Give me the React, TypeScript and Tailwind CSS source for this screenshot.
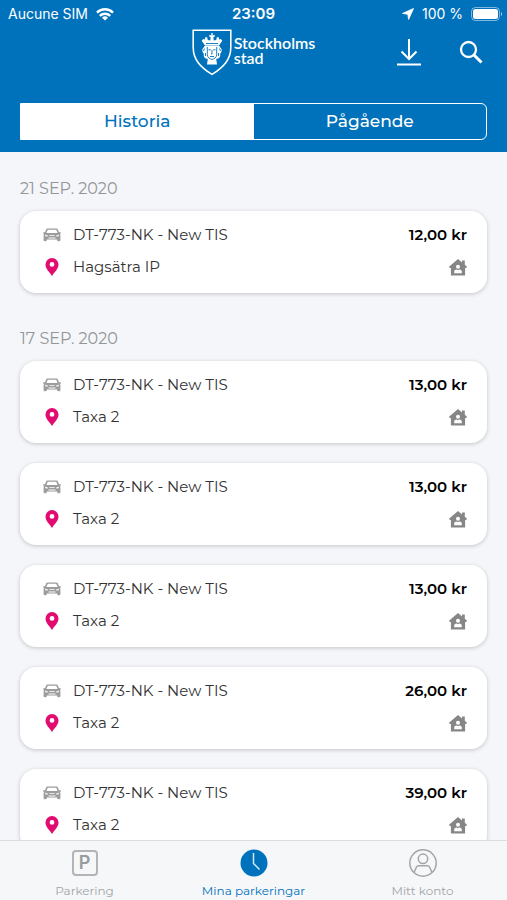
import { useState } from 'react'

type Parking = { plate: string; place: string; price: string }
type Day = { date: string; parkings: Parking[] }

const PLATE = 'DT-773-NK - New TIS'

const days: Day[] = [
  { date: '21 SEP. 2020', parkings: [{ plate: PLATE, place: 'Hagsätra IP', price: '12,00 kr' }] },
  {
    date: '17 SEP. 2020',
    parkings: [
      { plate: PLATE, place: 'Taxa 2', price: '13,00 kr' },
      { plate: PLATE, place: 'Taxa 2', price: '13,00 kr' },
      { plate: PLATE, place: 'Taxa 2', price: '13,00 kr' },
      { plate: PLATE, place: 'Taxa 2', price: '26,00 kr' },
      { plate: PLATE, place: 'Taxa 2', price: '39,00 kr' },
    ],
  },
]

const WifiIcon = () => (
  <svg width="18" height="13" viewBox="0 0 18 13" fill="none" stroke="white" strokeWidth="2.4">
    <path d="M1 4.6a11.4 11.4 0 0 1 16 0" />
    <path d="M3.8 7.9a7.4 7.4 0 0 1 10.4 0" />
    <path d="M6 9.8a4.3 4.3 0 0 1 6 0L9 12.6z" fill="white" stroke="none" />
  </svg>
)

const LocationIcon = () => (
  <svg width="12" height="12" viewBox="0 0 12 12" fill="white" stroke="white" strokeWidth="0.8" strokeLinejoin="round">
    <path d="M11.500.500 6.600 11.500 5.800 6.300.500 5.400z" />
  </svg>
)

const BatteryIcon = () => (
  <svg width="32" height="14" viewBox="0 0 32 14" fill="none">
    <rect x="0.5" y="0.5" width="28" height="13" rx="4" stroke="white" strokeOpacity="0.5" />
    <rect x="2" y="2" width="25" height="10" rx="2.5" fill="white" />
    <path d="M30 5c1.6.6 1.6 3.4 0 4z" fill="white" fillOpacity="0.6" />
  </svg>
)

const Shield = () => (
  <svg width="40" height="47" viewBox="0 0 40 47" fill="none">
    <path
      d="M1.2 1.2h37.6v17.2c0 12.4-7.6 20-18.8 27C8.800 38.400 1.200 30.800 1.200 18.400z"
      stroke="white"
      strokeWidth="1.6"
    />
    <path
      d="M19.300 4h1.400v2.400l2-.6v2l-1.400.4.500 3.300 2.400-.4.800-3 2 .3-.2 2 2-.3 1.500 1.600-3.100 4.500H12.800L9.700 11.700l1.500-1.600 2 .3-.2-2 2-.3.800 3 2.400.4.500-3.300-1.400-.4v-2l2 .6z"
      fill="white"
    />
    <path
      d="M13 16.500h14c1.200 2 3.200 3.200 2.700 5.700-.3 1.700-1.900 1.700-1.500 3.500.5 2.400-1.600 4.300-4 4L25 35.500H15l.800-5.800c-2.400.3-4.500-1.600-4-4 .4-1.800-1.200-1.800-1.500-3.500-.5-2.500 1.500-3.700 2.700-5.700z"
      fill="white"
    />
    <path d="M15.300 18v7.500c0 2.800 2.500 4.500 4.700 5 2.200-.5 4.700-2.200 4.700-5V18" stroke="#0072bc" strokeWidth="0.9" />
    <path
      d="M16.500 20.800h2.300M21.200 20.800h2.300M20 21v4h-1M18 27.500h4M12.500 19.500l-1 2.500M27.500 19.500l1 2.500M13.500 24v3M26.500 24v3M14 14.500h12"
      stroke="#0072bc"
      strokeWidth="0.9"
    />
  </svg>
)

const DownloadIcon = () => (
  <svg width="24" height="28" viewBox="0 0 24 28" fill="none" stroke="white" strokeWidth="2">
    <path d="M12 1v20M4.500 13.500 12 21l7.500-7.500M0 26.500h24" />
  </svg>
)

const SearchIcon = () => (
  <svg width="24" height="24" viewBox="0 0 24 24" fill="none" stroke="white">
    <circle cx="9.500" cy="9.500" r="7.500" strokeWidth="2.300" />
    <path d="m15 15 7.500 7.500" strokeWidth="3" />
  </svg>
)

const CarIcon = () => (
  <svg width="18" height="14" viewBox="0 0 18 14">
    <path
      d="M4.500.500h9c.7 0 1.200.4 1.400 1L16 4.300h1.300c.9 0 .9 1.300 0 1.400h-.6c.5.500.7 1.100.7 1.800V12c0 .7-.4 1.200-1.100 1.200h-1c-.7 0-1.100-.5-1.100-1.200v-.5H3.800v.5c0 .7-.4 1.200-1.100 1.200h-1C1 13.200.600 12.700.600 12V7.500c0-.7.200-1.300.7-1.800H.700c-.9-.1-.9-1.400 0-1.400H2l1.100-2.800c.2-.6.700-1 1.400-1z"
      fill="#9c9c9c"
    />
    <path d="M4.700 1.700h8.600l1.200 3.200h-11z" fill="white" />
    <path d="M2.200 6.700 4.800 7.500v1L2.200 8.300zM15.800 6.700l-2.600.8v1l2.600-.2zM6.300 7.300h5.400v.8H6.300zM5.500 9.600h7v.8h-7z" fill="white" />
  </svg>
)

const PinIcon = () => (
  <svg width="14" height="18" viewBox="0 0 14 18">
    <path
      d="M7 0a6.500 6.500 0 0 0-6.500 6.500C.500 11 5 14.500 7 18c2-3.500 6.500-7 6.500-11.500A6.500 6.500 0 0 0 7 0zm0 4a2.400 2.400 0 1 1 0 4.800A2.400 2.400 0 0 1 7 4z"
      fill="#e20b6f"
    />
  </svg>
)

const HomeUserIcon = () => (
  <svg width="18" height="17" viewBox="0 0 18 17">
    <path d="M9 0l4 3.400V1.500h2.800v4.300L18 7.800l-.8 1.200h-1.100v7.500H1.900V9H.800L0 7.800z" fill="#868686" />
    <circle cx="9" cy="7.800" r="2" fill="white" />
    <path d="M5.200 14.300v-1.500c0-1.600 1.100-2.400 2.500-2.400l1.300.8 1.300-.8c1.400 0 2.500.8 2.500 2.400v1.500z" fill="white" />
  </svg>
)

const ClockIcon = () => (
  <svg width="28" height="28" viewBox="0 0 28 28" fill="none">
    <circle cx="14" cy="14" r="13.500" fill="#0072bc" />
    <path d="M13.500 4v10.500l6 6" stroke="#d5e8f5" strokeWidth="1.500" />
  </svg>
)

const AccountIcon = () => (
  <svg width="28" height="28" viewBox="0 0 28 28" fill="none" stroke="#a3a5a7" strokeWidth="1.500">
    <circle cx="14" cy="14" r="13.200" />
    <circle cx="14" cy="9.800" r="4.700" />
    <path d="M5 23.500 7.500 18c.4-.9 1-1.300 2-1.300h9c1 0 1.600.4 2 1.300l2.500 5.500" />
  </svg>
)

const ParkingCard = ({ plate, place, price }: Parking) => (
  <li className="flex flex-col gap-3 rounded-2xl bg-white pt-[14px] pb-4 pl-[22px] pr-5 shadow-[0_1px_4px_rgba(0,0,0,0.2)]">
    <div className="flex h-5 items-center">
      <span className="flex w-[19px] justify-center"><CarIcon /></span>
      <span className="ml-3 text-[15px] leading-5 text-[#333]">{plate}</span>
      <span className="ml-auto text-[15px] font-semibold leading-5 text-black">{price}</span>
    </div>
    <div className="flex h-5 items-center">
      <span className="flex w-[19px] justify-center"><PinIcon /></span>
      <span className="ml-3 text-[15px] leading-5 text-[#333]">{place}</span>
      <span className="ml-auto flex"><HomeUserIcon /></span>
    </div>
  </li>
)

const App = () => {
  const [tab, setTab] = useState('historia')

  return (
    <div className="flex h-screen flex-col bg-[#f4f6f9] font-[Montserrat,Inter,sans-serif]">
      <header className="bg-[#0072bc] px-5 pb-3 text-white">
        <div className="-mx-3 grid h-7 grid-cols-3 items-center font-[Inter,sans-serif] text-[14px] leading-5">
          <div className="flex items-center gap-2">
            Aucune SIM <WifiIcon />
          </div>
          <div className="text-center text-[15px] font-semibold">23:09</div>
          <div className="-mr-1 flex items-center justify-end">
            <LocationIcon />
            <span className="mx-2">100 %</span>
            <BatteryIcon />
          </div>
        </div>

        <div className="grid h-12 grid-cols-[1fr_auto_1fr] items-center">
          <div />
          <div className="flex items-center gap-[2px]">
            <Shield />
            <div className="pb-1 font-[Lato,sans-serif] text-base font-semibold leading-[15px]">
              Stockholms
              <br />
              stad
            </div>
          </div>
          <div className="flex items-center justify-end gap-[38px] pr-1">
            <button aria-label="Ladda ner"><DownloadIcon /></button>
            <button aria-label="Sök"><SearchIcon /></button>
          </div>
        </div>

        <div className="mt-[27px] grid h-[37px] grid-cols-2 overflow-hidden rounded-r-md border border-white text-[17px] font-medium">
          <button onClick={() => setTab('historia')} className={tab === 'historia' ? 'bg-white text-[#0072bc]' : 'text-white'}>
            Historia
          </button>
          <button onClick={() => setTab('pagaende')} className={tab === 'pagaende' ? 'bg-white text-[#0072bc]' : 'text-white'}>
            Pågående
          </button>
        </div>
      </header>

      <main className="min-h-0 flex-1 overflow-y-auto px-5 pt-[27px] [scrollbar-width:none]">
        {days.map((day) => (
          <section key={day.date} className="mb-9">
            <h2 className="mb-3 text-base leading-5 text-[#939597]">{day.date}</h2>
            <ul className="flex flex-col gap-5">
              {day.parkings.map((parking, i) => (
                <ParkingCard key={i} {...parking} />
              ))}
            </ul>
          </section>
        ))}
      </main>

      <nav className="grid h-[60px] grid-cols-3 border-t border-[#dcdddf] bg-[#f5f7f9] text-[12px] leading-4 text-[#a3a5a7]">
        <a href="#parkering" className="flex flex-col items-center gap-[6px] pt-2">
          <span className="flex h-7 items-center">
            <span className="flex size-[26px] items-center justify-center rounded-sm border-2 border-[#b2b4b6] font-[Inter,sans-serif] text-lg font-semibold text-[#999b9d]">P</span>
          </span>
          Parkering
        </a>
        <a href="#mina-parkeringar" className="flex flex-col items-center gap-[6px] pt-2 text-[#0072bc]">
          <ClockIcon />
          Mina parkeringar
        </a>
        <a href="#mitt-konto" className="flex flex-col items-center gap-[6px] pt-2">
          <AccountIcon />
          Mitt konto
        </a>
      </nav>
    </div>
  )
}

export default App
